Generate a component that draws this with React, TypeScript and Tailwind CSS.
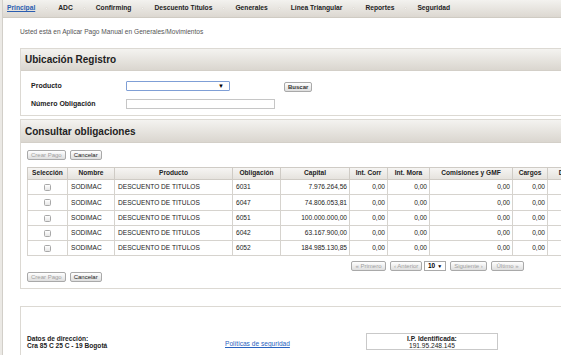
const navItems = ['Principal', 'ADC', 'Confirming', 'Descuento Títulos', 'Generales', 'Línea Triangular', 'Reportes', 'Seguridad']

const rows = [
  { obl: '6031', capital: '7.976.264,56' },
  { obl: '6047', capital: '74.806.053,81' },
  { obl: '6051', capital: '100.000.000,00' },
  { obl: '6042', capital: '63.167.900,00' },
  { obl: '6052', capital: '184.985.130,85' },
]

// boton gris pequeño
function SmallButton({ label, disabled, className = '' }: { label: string; disabled?: boolean; className?: string }) {
  return (
    <button
      className={`h-[10px] px-[3px] text-[6px] leading-none whitespace-nowrap border border-[#a9a9a9] rounded-[2px] bg-linear-to-b from-white to-[#dedede] ${disabled ? 'text-[#a0a0a0]' : 'text-[#222]'} ${className}`}
    >
      {label}
    </button>
  )
}

function PanelHeader({ title, h = 'h-[22px]' }: { title: string; h?: string }) {
  return (
    <div className={`${h} flex items-center pl-[4px] bg-linear-to-b from-[#f4f3f0] to-[#dad6cf] border-b border-[#d3cfc8]`}>
      <span className="text-[10px] font-bold text-[#222]">{title}</span>
    </div>
  )
}

export default function App() {
  return (
    <div
      className="w-[561px] h-[355px] overflow-hidden bg-white flex"
      style={{ fontFamily: '"Liberation Sans", Arial, sans-serif' }}
    >
      {/* franja izquierda */}
      <div className="w-[3px] shrink-0 bg-[#ebe9e5] border-r border-[#d2cfc9]" />

      <div className="flex-1 min-w-0">
        {/* menu superior */}
        <div className="h-[18px] flex items-center pl-[4px] bg-linear-to-b from-[#f3f2ef] to-[#dcd8d1] border-b border-[#cfcbc3]">
          {navItems.map((item, i) => (
            <div key={item} className="flex items-center">
              <span
                className={`text-[6.7px] font-bold whitespace-nowrap ${i === 0 ? 'text-[#2a5db0] underline' : 'text-[#222]'}`}
              >
                {item}
              </span>
              {i < navItems.length - 1 && (
                <span className="mx-[10px] w-[3px] h-[3px] rounded-full bg-[#f4f3f0] border border-[#e2dfd9]" />
              )}
            </div>
          ))}
        </div>

        <div className="pl-[17px]">
          <p className="mt-[10px] text-[6.6px] text-[#555] leading-[8px]">
            Usted está en Aplicar Pago Manual en Generales/Movimientos
          </p>

          {/* Ubicación Registro */}
          <div className="mt-[12px] w-[600px] h-[68px] border border-r-0 border-[#dcd9d3]">
            <PanelHeader title="Ubicación Registro" />
            <div className="pl-[10px] pt-[10px] text-[7px] font-bold text-[#222]">
              <div className="flex items-center h-[10px]">
                <span className="w-[95px]">Producto</span>
                <div className="w-[104px] h-[10px] border border-[#7f9fd6] rounded-[1px] bg-white flex items-center justify-end pr-[5px]">
                  <span className="text-[6px] text-black">▼</span>
                </div>
                <SmallButton label="Buscar" className="ml-[54px] mt-[2px] text-[#333]" />
              </div>
              <div className="flex items-center h-[10px] mt-[8px]">
                <span className="w-[95px]">Número Obligación</span>
                <div className="w-[149px] h-[10px] border border-[#c6c6c6] bg-white" />
              </div>
            </div>
          </div>

          {/* Consultar obligaciones */}
          <div className="mt-[3px] w-[600px] h-[170px] border border-r-0 border-[#dcd9d3]">
            <PanelHeader title="Consultar obligaciones" h="h-[23px]" />
            <div className="pl-[6px] pt-[7px]">
              <div className="flex gap-[4px]">
                <SmallButton label="Crear Pago" disabled />
                <SmallButton label="Cancelar" />
              </div>

              <table className="mt-[7px] border-collapse text-[6.6px] text-[#222] table-fixed w-[580px]">
                <colgroup>
                  <col className="w-[40px]" />
                  <col className="w-[47px]" />
                  <col className="w-[118px]" />
                  <col className="w-[48px]" />
                  <col className="w-[69px]" />
                  <col className="w-[38px]" />
                  <col className="w-[42px]" />
                  <col className="w-[83px]" />
                  <col className="w-[35px]" />
                  <col className="w-[60px]" />
                </colgroup>
                <thead>
                  <tr className="h-[12px] bg-linear-to-b from-[#f6f5f3] to-[#e4e1dc]">
                    {['Selección', 'Nombre', 'Producto', 'Obligación', 'Capital', 'Int. Corr', 'Int. Mora', 'Comisiones y GMF', 'Cargos', 'Descuentos'].map(h => (
                      <th key={h} className="border border-[#cfcbc5] font-bold text-center whitespace-nowrap overflow-hidden px-0 leading-none">
                        {h}
                      </th>
                    ))}
                  </tr>
                </thead>
                <tbody>
                  {rows.map(r => (
                    <tr key={r.obl} className="h-[15.3px]">
                      <td className="border border-[#d6d3ce] text-center">
                        <span className="inline-block align-middle w-[7px] h-[7px] rounded-[1.5px] border border-[#a8a8a8] bg-linear-to-b from-white to-[#e6e6e6]" />
                      </td>
                      <td className="border border-[#d6d3ce] pl-[3px]">SODIMAC</td>
                      <td className="border border-[#d6d3ce] pl-[3px]">DESCUENTO DE TITULOS</td>
                      <td className="border border-[#d6d3ce] pl-[3px]">{r.obl}</td>
                      <td className="border border-[#d6d3ce] text-right pr-[2px]">{r.capital}</td>
                      <td className="border border-[#d6d3ce] text-right pr-[2px]">0,00</td>
                      <td className="border border-[#d6d3ce] text-right pr-[2px]">0,00</td>
                      <td className="border border-[#d6d3ce] text-right pr-[2px]">0,00</td>
                      <td className="border border-[#d6d3ce] text-right pr-[2px]">0,00</td>
                      <td className="border border-[#d6d3ce]" />
                    </tr>
                  ))}
                </tbody>
              </table>

              {/* paginación */}
              <div className="mt-[5px] ml-[324px] flex items-center gap-[4px]">
                <SmallButton label="« Primero" disabled className="w-[35px]" />
                <SmallButton label="‹ Anterior" disabled className="w-[32px]" />
                <div className="h-[10px] w-[22px] border border-[#a9a9a9] bg-white flex items-center justify-center gap-[2px] -ml-[2px]">
                  <span className="text-[6.5px] font-bold text-black leading-none">10</span>
                  <span className="text-[5px] text-black leading-none">▼</span>
                </div>
                <SmallButton label="Siguiente ›" disabled className="w-[37px]" />
                <SmallButton label="Último »" disabled className="w-[33px]" />
              </div>

              <div className="flex gap-[4px] mt-[1px]">
                <SmallButton label="Crear Pago" disabled />
                <SmallButton label="Cancelar" />
              </div>
            </div>
          </div>

          {/* pie */}
          <div className="mt-[17px] w-[600px] h-[60px] border-t border-l border-[#dcd9d3] flex items-start pt-[26px]">
            <div className="ml-[6px] w-[190px] text-[6.6px] font-bold text-[#222] leading-[7px] mt-[2px]">
              <div>Datos de dirección:</div>
              <div>Cra 85 C 25 C - 19 Bogotá</div>
            </div>
            <a className="mt-[8px] ml-[8px] text-[6.6px] text-[#2a63c0] underline leading-none">Políticas de seguridad</a>
            <div className="ml-[76px] w-[132px] h-[17px] border border-[#c9c9c9] flex flex-col items-center justify-center text-[6.6px] leading-[7px] text-[#222]">
              <span className="font-bold">I.P. Identificada:</span>
              <span>191.95.248.145</span>
            </div>
          </div>
        </div>
      </div>
    </div>
  )
}
